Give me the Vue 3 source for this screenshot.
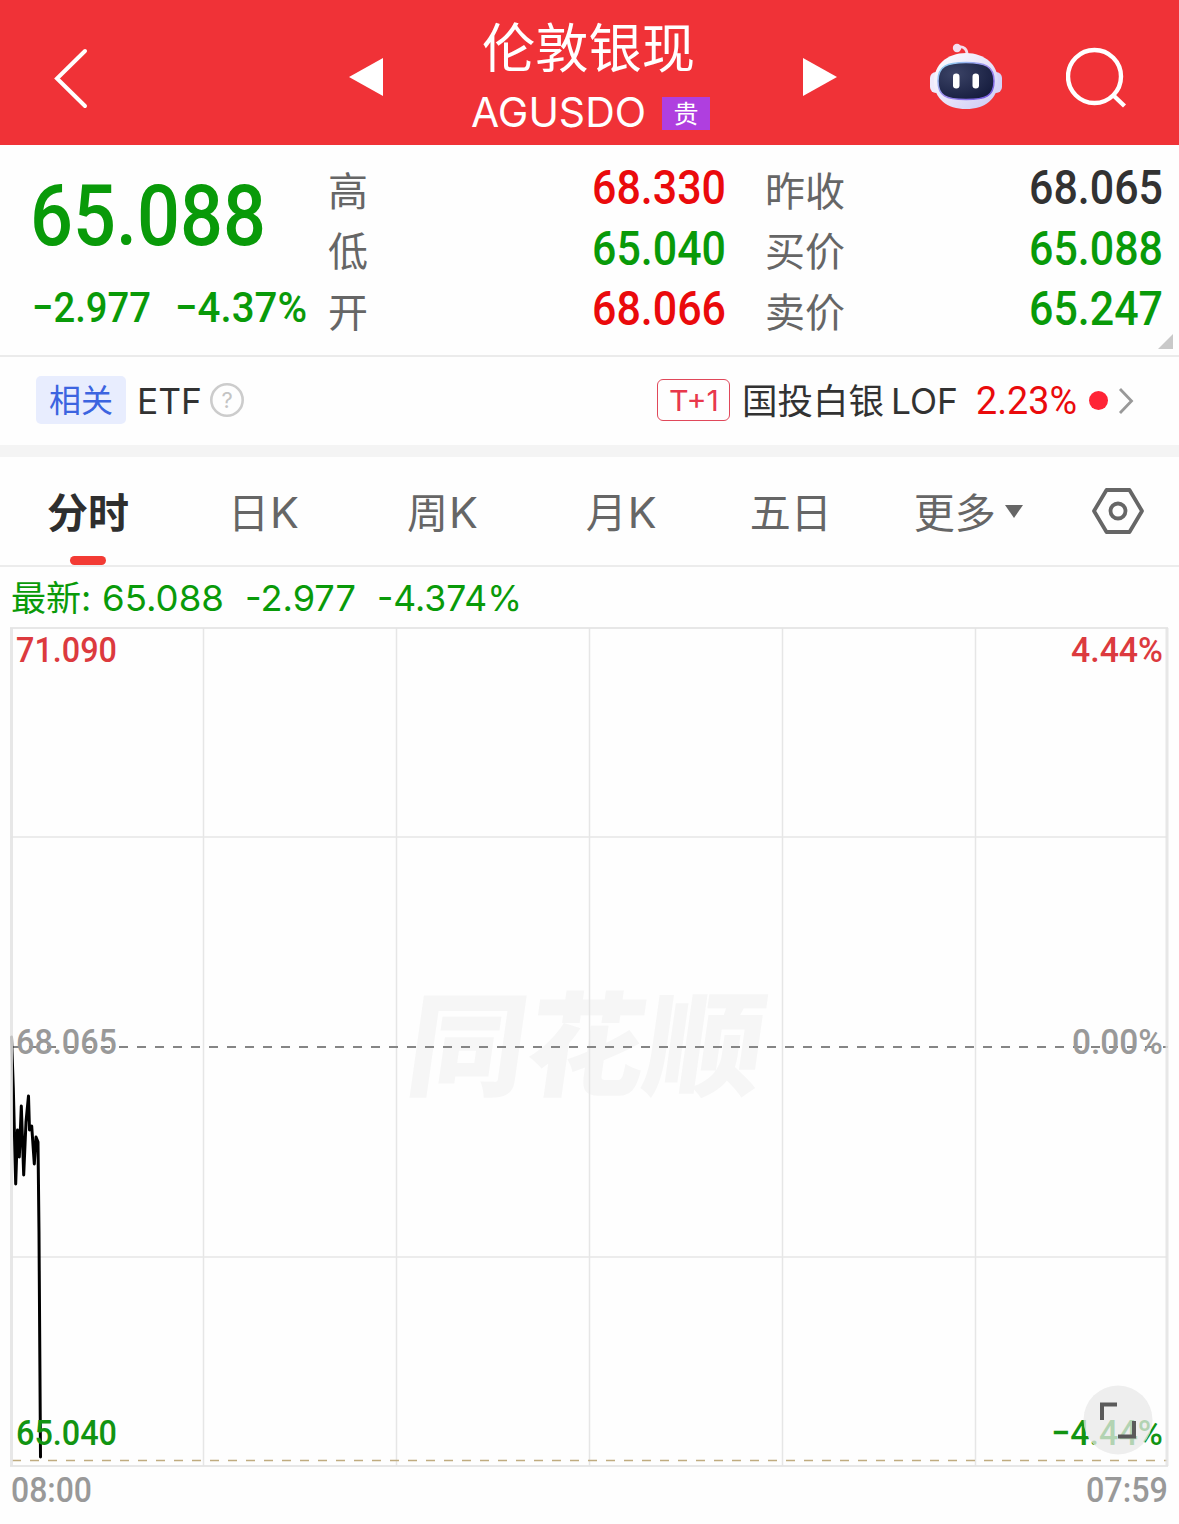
<template>
  <div class="page">
    <header class="header">
      <svg class="back" width="40" height="64" viewBox="0 0 40 64">
        <path d="M33 5 5 32.500 33 60" />
      </svg>
      <svg class="prev" width="34" height="40" viewBox="0 0 34 40">
        <path d="M0 20 34 1v38z" />
      </svg>
      <div class="title">
        <FitText class="cjk" text="伦敦银现" :w="213" :size="53" />
        <div class="code">
          <FitText class="inter" text="AGUSDO" :w="175" :size="41" />
          <span class="tag">贵</span>
        </div>
      </div>
      <svg class="next" width="34" height="40" viewBox="0 0 34 40">
        <path d="M34 20 0 1v38z" />
      </svg>
      <svg class="robot" width="72" height="68" viewBox="0 0 72 68">
        <defs>
          <linearGradient id="shell" x1="0" y1="0" x2="1" y2="1">
            <stop offset="0" stop-color="#ffffff" />
            <stop offset="0.5" stop-color="#e9e5fa" />
            <stop offset="1" stop-color="#c9c9f5" />
          </linearGradient>
          <linearGradient id="rim" x1="0" y1="0" x2="1" y2="1">
            <stop offset="0" stop-color="#8fdcf0" />
            <stop offset="0.5" stop-color="#a08cf0" />
            <stop offset="1" stop-color="#6a50dc" />
          </linearGradient>
          <radialGradient id="face" cx="0.3" cy="0.3" r="0.8">
            <stop offset="0" stop-color="#3b4366" />
            <stop offset="1" stop-color="#151c3e" />
          </radialGradient>
        </defs>
        <path d="M27 5C33 2 38 6 37 14" fill="none" stroke="#f3dcea" stroke-width="2.800" />
        <circle cx="27" cy="5" r="4.200" fill="#f3dff0" />
        <rect x="0" y="29" width="12" height="21" rx="6" fill="#eeeafc" />
        <rect x="60" y="29" width="12" height="21" rx="6" fill="#d5d3f8" />
        <path
          d="M36 10C55 10 68 22 68 38 68 56 55 66 36 66S4 56 4 38C4 22 17 10 36 10Z"
          fill="url(#shell)"
        />
        <path
          d="M36 19.500C55 19.500 64 23 64 38 64 53 56 56.500 36 56.500S8 53 8 38C8 23 17 19.500 36 19.500Z"
          fill="url(#face)"
          stroke="url(#rim)"
          stroke-width="1.500"
        />
        <rect x="23" y="30.500" width="6.500" height="15" rx="3.200" fill="#fff" />
        <rect x="42.500" y="30.500" width="6.500" height="15" rx="3.200" fill="#fff" />
      </svg>
      <svg class="search" width="64" height="62" viewBox="0 0 64 62">
        <circle cx="28.500" cy="30.500" r="26.500" />
        <path d="m48 50 10.500 10" />
      </svg>
    </header>

    <section class="quote">
      <div class="last down">
        <FitText class="num" text="65.088" :w="236" :size="85" />
        <div class="change">
          <FitText class="num" text="−2.977" :w="119" :size="42" />
          <FitText class="num" text="−4.37%" :w="132" :size="42" />
        </div>
      </div>
      <div v-for="(col, i) in quotes" :key="i" class="col">
        <div v-for="row in col" :key="row.label" class="row">
          <span class="name">{{ row.label }}</span>
          <FitText class="num" :class="row.tone" :text="row.value" :w="134" :size="48" />
        </div>
      </div>
      <i class="fold"></i>
    </section>

    <section class="related">
      <span class="rel-tag">相关</span>
      <FitText class="inter etf" text="ETF" :w="65" :size="35" />
      <svg class="help" width="36" height="36" viewBox="0 0 36 36">
        <circle cx="18" cy="18" r="15.700" />
        <text x="18" y="26" text-anchor="middle">?</text>
      </svg>
      <span class="t1"><FitText class="inter" text="T+1" :w="50" :size="29" /></span>
      <FitText class="cjk fund" text="国投白银" :w="142" :size="35" />
      <FitText class="inter lof" text="LOF" :w="67" :size="35" />
      <FitText class="num pct up" text="2.23%" :w="101" :size="38" />
      <i class="dot"></i>
      <svg class="more" width="16" height="28" viewBox="0 0 16 28">
        <path d="m2 2 11.500 12L2 26" />
      </svg>
    </section>

    <nav class="tabs">
      <span v-for="tab in tabs" :key="tab" class="tab" :class="{ active: tab === current }" @click="current = tab">
        <span>{{ tab[0] }}</span><span :class="{ latin: tab[1] === 'K' }">{{ tab[1] }}</span>
      </span>
      <span class="tab more-tab">更多<i class="caret"></i></span>
      <svg class="setting" width="54" height="50" viewBox="0 0 54 50">
        <path d="M15.500 4h23L51 25 38.500 46h-23L3 25z" />
        <circle cx="27" cy="25" r="7.500" />
      </svg>
    </nav>

    <div class="latest down">
      <FitText class="cjk" text="最新:" :w="80" :size="35" />
      <FitText class="inter" text="65.088" :w="122" :size="35.5" />
      <FitText class="inter" text="-2.977" :w="111" :size="35.5" />
      <FitText class="inter" text="-4.374%" :w="145" :size="35.5" />
    </div>

    <svg class="chart" width="1179" height="897" viewBox="0 627 1179 897">
      <text class="watermark" transform="translate(403 1087) skewX(-8)" textLength="356" lengthAdjust="spacingAndGlyphs">同花顺</text>
      <g class="grid">
        <path v-for="x in gridX" :key="x" :d="`M${x} 628V1466`" />
        <path d="M11 837H1167M11 1257H1167" />
      </g>
      <path class="base" d="M11 1047H1168" />
      <path class="low" d="M12 1460.500H1167" />
      <polyline class="price" :points="points" />
      <path class="frame" d="M11.500 628V1466M1167 628V1466" />
      <path class="frame edge" d="M10 628H1168M10 1466H1168" />
      <text
        v-for="l in labels"
        :key="l.text"
        class="label"
        :class="l.tone"
        :x="l.x"
        :y="l.y"
        :textLength="l.w"
        lengthAdjust="spacingAndGlyphs"
      >{{ l.text }}</text>
      <circle class="full-bg" cx="1118" cy="1420" r="34.500" />
      <path class="full" d="M1117 1404.500H1102V1420M1118 1436.500H1134V1421" />
    </svg>
  </div>
</template>

<script setup>
import { ref, h } from 'vue'

// one line of text fitted to a fixed width
const FitText = (props) =>
  h('svg', { width: props.w, height: props.size, overflow: 'visible' }, [
    h('text', {
      x: 0,
      y: props.size * 0.85,
      fill: 'currentColor',
      'font-size': props.size,
      textLength: props.w,
      lengthAdjust: 'spacingAndGlyphs'
    }, props.text)
  ])
FitText.props = ['text', 'w', 'size']

const quotes = [
  [
    { label: '高', value: '68.330', tone: 'up' },
    { label: '低', value: '65.040', tone: 'down' },
    { label: '开', value: '68.066', tone: 'up' }
  ],
  [
    { label: '昨收', value: '68.065', tone: 'flat' },
    { label: '买价', value: '65.088', tone: 'down' },
    { label: '卖价', value: '65.247', tone: 'down' }
  ]
]

const tabs = ['分时', '日K', '周K', '月K', '五日']
const current = ref('分时')

const gridX = [203.5, 396.5, 589.5, 782.5, 975.5]

const points = [
  [11.5, 1037], [13.3, 1088], [15.7, 1184], [17.5, 1130], [19.3, 1157],
  [21.3, 1106], [23.7, 1175], [26, 1122], [28.5, 1096], [29.5, 1130],
  [31.7, 1126], [34.3, 1164], [36, 1137], [38, 1142], [39, 1233], [40.5, 1457]
].join(' ')

const labels = [
  { text: '71.090', x: 16, y: 662, w: 101, tone: 'top' },
  { text: '4.44%', x: 1071, y: 662, w: 92, tone: 'top' },
  { text: '68.065', x: 16, y: 1054, w: 101, tone: 'mid' },
  { text: '0.00%', x: 1072, y: 1054, w: 91, tone: 'mid' },
  { text: '65.040', x: 16, y: 1445, w: 101, tone: 'bottom' },
  { text: '−4.44%', x: 1051, y: 1445, w: 112, tone: 'bottom' },
  { text: '08:00', x: 11, y: 1502, w: 81, tone: 'time' },
  { text: '07:59', x: 1086, y: 1502, w: 82, tone: 'time' }
]
</script>

<style>
body {
  background: #fff;
}
</style>

<style scoped>
.page {
  width: 1179px;
  height: 1524px;
  overflow: hidden;
  background: #fefefe;
  font-family: 'Noto Sans CJK SC', sans-serif;
  color: #323232;
}

svg {
  display: block;
  flex: none;
}

.num {
  font-family: Roboto, sans-serif;
  font-weight: 500;
}

.inter {
  font-family: Inter, sans-serif;
}

.cjk {
  font-family: 'Noto Sans CJK SC', sans-serif;
}

.up {
  color: #ea0a0c;
}

.down {
  color: #099a09;
}

.flat {
  color: #323232;
}

/* ===== header ===== */
.header {
  height: 145px;
  display: flex;
  align-items: center;
  background: #f03237;
  color: #fff;
}

.back {
  margin: 10px 0 0 52px;
  fill: none;
  stroke: #fff;
  stroke-width: 4;
  stroke-linecap: round;
}

.prev,
.next {
  margin-top: 9px;
  fill: #fff;
}

.prev {
  margin-left: 257px;
}

.title {
  width: 240px;
  margin-left: 89px;
  height: 145px;
  box-sizing: border-box;
  padding: 23px 0 0 10px;
}

.code {
  display: flex;
  align-items: center;
  margin: 16px 0 0 -11px;
}

.tag {
  width: 48px;
  height: 33px;
  margin: 1px 0 0 16px;
  background: #af3fdf;
  font-size: 25px;
  line-height: 31px;
  text-align: center;
}

.next {
  margin-left: 91px;
}

.robot {
  margin: 8px 0 0 93px;
}

.search {
  margin: 9px 0 0 64px;
  fill: none;
  stroke: #fff;
  stroke-width: 4.400;
}

/* ===== quote ===== */
.quote {
  position: relative;
  display: flex;
  height: 210px;
  border-bottom: 2px solid #ebebeb;
}

.last {
  width: 298px;
  padding: 28px 0 0 30px;
}

.change {
  display: flex;
  gap: 24px;
  margin: 28px 0 0 2px;
}

.col {
  width: 398px;
  padding-top: 14px;
}

.col + .col {
  margin-left: 39px;
}

.row {
  display: flex;
  align-items: center;
  justify-content: space-between;
  height: 60.500px;
  font-size: 40px;
  color: #666;
}

.name {
  margin-top: -1px;
}

.row svg {
  margin: -4px 0.500px 0 0;
}

.fold {
  position: absolute;
  right: 6px;
  bottom: 6px;
  border-style: solid;
  border-width: 0 0 15px 15px;
  border-color: transparent transparent #c9c9c9;
}

/* ===== related ===== */
.related {
  display: flex;
  align-items: center;
  height: 88px;
  border-bottom: 12px solid #f4f4f4;
}

.rel-tag {
  width: 90px;
  height: 48px;
  margin: -2px 0 0 36px;
  border-radius: 5px;
  background: #e8edfe;
  color: #3c64e0;
  font-size: 32px;
  line-height: 45px;
  text-align: center;
}

.etf {
  margin-left: 11px;
}

.help {
  margin: -2px 0 0 7px;
}

.help circle {
  fill: none;
  stroke: #ccc;
  stroke-width: 2.600;
}

.help text {
  font: 22px Inter, sans-serif;
  fill: #c4c4c4;
}

.t1 {
  display: flex;
  align-items: center;
  justify-content: center;
  box-sizing: border-box;
  width: 73px;
  height: 42px;
  margin: -2px 0 0 412px;
  border: 1.500px solid #e0485a;
  border-radius: 6px;
  color: #e8384c;
}

.fund {
  margin-left: 12px;
}

.lof {
  margin-left: 7px;
}

.pct {
  margin-left: 18px;
  font-weight: 400;
}

.dot {
  width: 19px;
  height: 19px;
  margin: -1px 12px 0;
  border-radius: 50%;
  background: #ff2436;
}

.more {
  margin-left: -2px;
  fill: none;
  stroke: #999;
  stroke-width: 2.800;
}

/* ===== tabs ===== */
.tabs {
  display: flex;
  align-items: center;
  height: 108px;
  border-bottom: 2px solid #ececec;
  font-size: 41px;
  color: #666;
}

.tab {
  position: relative;
  display: flex;
  align-items: center;
  box-sizing: border-box;
  height: 108px;
  padding-bottom: 2px;
  margin-right: 99px;
}

.tab:first-child {
  margin-left: 47px;
}

.tab:nth-child(2) {
  margin-right: 108px;
}

.tab:nth-child(3) {
  margin-right: 108px;
}

.tab:nth-child(4) {
  margin-right: 93px;
}

.tab:nth-child(5) {
  margin-right: 82px;
}

.latin {
  margin-left: 1px;
  padding-top: 3px;
  font-family: Inter, sans-serif;
  font-size: 43px;
}

.active {
  color: #2e2e2e;
  font-weight: 600;
}

.active::after {
  content: '';
  position: absolute;
  left: 23px;
  bottom: 0;
  width: 36px;
  height: 9px;
  border-radius: 5px;
  background: #f33b34;
}

.more-tab {
  margin-right: 68px;
}

.caret {
  margin: 2px 0 0 9px;
  border-style: solid;
  border-width: 13px 9.500px 0;
  border-color: #666 transparent transparent;
}

.setting {
  fill: none;
  stroke: #666;
  stroke-width: 3.800;
  stroke-linejoin: round;
}

/* ===== chart ===== */
.latest {
  display: flex;
  align-items: center;
  gap: 21px;
  height: 60px;
  padding: 2px 0 0 11px;
  box-sizing: border-box;
}

.latest svg:nth-child(n + 2) {
  margin-top: 1px;
}

.latest svg:nth-child(2) {
  margin-left: -10px;
}

.grid path {
  stroke: #e6e6e6;
  stroke-width: 1.500;
}

.frame {
  stroke: #e4e4e4;
  stroke-width: 3;
  opacity: 0.85;
}

.edge {
  stroke-width: 2;
}

.base {
  stroke: #858585;
  stroke-width: 2;
  stroke-dasharray: 9 9;
}

.low {
  stroke: #c0ac80;
  stroke-width: 1.500;
  stroke-dasharray: 9 9;
}

.price {
  fill: none;
  stroke: #000;
  stroke-width: 3;
  stroke-linejoin: round;
  stroke-linecap: round;
}

.watermark {
  font-size: 113px;
  font-weight: 900;
  fill: #f6f6f6;
}

.label {
  font: 500 35.500px Roboto, sans-serif;
}

.top {
  fill: #dc3a3e;
}

.mid,
.time {
  fill: #999;
}

.bottom {
  fill: #129412;
}

.full-bg {
  fill: #e8e8e8;
  opacity: 0.75;
}

.full {
  fill: none;
  stroke: #5a5a5a;
  stroke-width: 4;
}
</style>
